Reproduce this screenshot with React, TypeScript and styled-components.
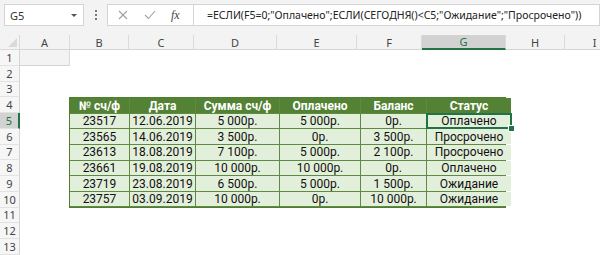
import * as React from 'react';
import styled, { createGlobalStyle, css } from 'styled-components';

const GlobalStyle = createGlobalStyle`
  html, body {
    margin: 0;
    padding: 0;
    background: #ffffff;
    overflow: hidden;
  }
`;

const COLUMNS = ['A', 'B', 'C', 'D', 'E', 'F', 'G', 'H', 'I'];
const COL_WIDTHS = [20, 50, 59, 65, 83, 80, 65, 84, 59, 60];
const ROW_H = 15.75;
const ROW_COUNT = 13;

const HEADERS = ['№ сч/ф', 'Дата', 'Сумма сч/ф', 'Оплачено', 'Баланс', 'Статус'];

const ROWS = [
  ['23517', '12.06.2019', '5 000р.', '5 000р.', '0р.', 'Оплачено'],
  ['23565', '14.06.2019', '3 500р.', '0р.', '3 500р.', 'Просрочено'],
  ['23613', '18.08.2019', '7 100р.', '5 000р.', '2 100р.', 'Просрочено'],
  ['23661', '19.08.2019', '10 000р.', '10 000р.', '0р.', 'Оплачено'],
  ['23719', '23.08.2019', '6 500р.', '5 000р.', '1 500р.', 'Ожидание'],
  ['23757', '03.09.2019', '10 000р.', '0р.', '10 000р.', 'Ожидание'],
];

// <editor-fold desc="Styled Component">
const Page = styled.div`
  width: 600px;
  height: 255px;
  display: flex;
  flex-direction: column;
  background: #ffffff;
  font-family: 'Noto Sans', 'Open Sans', sans-serif;
  overflow: hidden;
`;

const Toolbar = styled.div`
  height: 35px;
  flex: none;
  display: flex;
  align-items: flex-start;
  padding: 4px 0 0 4px;
  box-sizing: border-box;
  background: #f3f3f3;
`;

const Box = styled.div`
  height: 22px;
  box-sizing: border-box;
  background: #ffffff;
  border: 1px solid #d4d4d4;
  display: flex;
  align-items: center;
`;

const NameBox = styled(Box)`
  width: 80px;
  padding: 0 6px 0 5px;
  justify-content: space-between;
  font-size: 11px;
  color: #333333;
`;

const Caret = styled.span`
  width: 0;
  height: 0;
  border-left: 3px solid transparent;
  border-right: 3px solid transparent;
  border-top: 3px solid #555555;
`;

const Grip = styled.div`
  width: 23px;
  height: 22px;
  display: flex;
  flex-direction: column;
  align-items: center;
  justify-content: center;
  gap: 2px;
  & > span {
    width: 2px;
    height: 2px;
    background: #777777;
  }
`;

const ActionBox = styled(Box)`
  width: 86px;
  padding: 0 0 0 10px;
  gap: 16px;
  border-right: none;
`;

const FormulaBox = styled(Box)`
  flex: 1;
  padding-left: 13px;
  font-size: 10.5px;
  color: #222222;
  white-space: nowrap;
  overflow: hidden;
`;

const Fx = styled.span`
  font-family: 'Liberation Serif', serif;
  font-style: italic;
  font-size: 12px;
  color: #444444;
  margin-left: -1px;
`;

const Sheet = styled.div`
  display: grid;
  grid-template-columns: ${COL_WIDTHS.map((w) => `${w}px`).join(' ')};
  grid-template-rows: 15px repeat(${ROW_COUNT}, ${ROW_H}px);
`;

const Corner = styled.div`
  background: #f3f3f3;
  border-right: 1px solid #d9d9d9;
  border-bottom: 1px solid #d9d9d9;
  box-sizing: border-box;
  position: relative;
  &::after {
    content: '';
    position: absolute;
    right: 2px;
    bottom: 2px;
    width: 0;
    height: 0;
    border-left: 9px solid transparent;
    border-bottom: 9px solid #dadada;
  }
`;

const ColHead = styled.div<{ $active?: boolean }>`
  box-sizing: border-box;
  display: flex;
  align-items: center;
  justify-content: center;
  font-size: 11px;
  color: #444444;
  background: #f3f3f3;
  border-right: 1px solid #dadada;
  border-bottom: 1px solid #d4d4d4;
  ${(p) =>
    p.$active &&
    css`
      background: #d2d2d2;
      color: #217346;
      border-bottom: 2px solid #217346;
    `}
`;

const RowHead = styled.div<{ $active?: boolean }>`
  box-sizing: border-box;
  display: flex;
  align-items: center;
  justify-content: center;
  font-size: 11px;
  color: #444444;
  background: #f6f6f6;
  border-right: 1px solid #d4d4d4;
  border-bottom: 1px solid #e2e2e2;
  ${(p) =>
    p.$active &&
    css`
      background: #d2d2d2;
      color: #217346;
      border-right: 2px solid #217346;
    `}
`;

const Table = styled.div`
  grid-column: 3 / 9;
  grid-row: 5 / 12;
  margin-left: -1px;
  display: grid;
  grid-template-columns: ${COL_WIDTHS.slice(2, 8).map((w) => `${w}px`).join(' ')};
  grid-template-rows: repeat(7, 1fr);
  border: 1px solid #4f7d32;
  background: #5f8a41;
  gap: 1px;
  z-index: 1;
`;

const Cell = styled.div<{ $head?: boolean; $selected?: boolean }>`
  display: flex;
  align-items: center;
  justify-content: center;
  position: relative;
  font-family: Roboto, 'Noto Sans', sans-serif;
  font-size: 12px;
  white-space: nowrap;
  overflow: visible;
  background: #e2efda;
  color: #111111;
  ${(p) =>
    p.$head &&
    css`
      background: #548235;
      color: #ffffff;
      font-weight: 700;
    `}
  ${(p) =>
    p.$selected &&
    css`
      &::after {
        content: '';
        position: absolute;
        inset: -1px;
        border: 2px solid #217346;
      }
      &::before {
        content: '';
        position: absolute;
        right: -4px;
        bottom: -4px;
        width: 5px;
        height: 5px;
        background: #217346;
        border: 1px solid #ffffff;
        z-index: 2;
      }
    `}
`;
// </editor-fold>

const CrossIcon = () => (
  <svg width="10" height="10" viewBox="0 0 10 10">
    <path d="M1 1 L9 9 M9 1 L1 9" stroke="#a0a0a0" strokeWidth="1.1" fill="none" />
  </svg>
);

const CheckIcon = () => (
  <svg width="12" height="10" viewBox="0 0 12 10">
    <path d="M1 5 L4.5 8.5 L11 1" stroke="#a0a0a0" strokeWidth="1.1" fill="none" />
  </svg>
);

export default function App() {
  const sheetCells: React.ReactNode[] = [];

  sheetCells.push(<Corner key="corner" />);
  COLUMNS.forEach((c) => {
    sheetCells.push(
      <ColHead key={`c-${c}`} $active={c === 'G'}>
        {c}
      </ColHead>
    );
  });
  sheetCells.push(<ColHead key="c-rest" />);

  for (let r = 1; r <= ROW_COUNT; r++) {
    sheetCells.push(
      <RowHead key={`r-${r}`} style={{ gridColumn: 1, gridRow: r + 1 }} $active={r === 5}>
        {r}
      </RowHead>
    );
  }

  return (
    <Page>
      <GlobalStyle />
      <Toolbar>
        <NameBox>
          <span>G5</span>
          <Caret />
        </NameBox>
        <Grip>
          <span />
          <span />
          <span />
        </Grip>
        <ActionBox>
          <CrossIcon />
          <CheckIcon />
          <Fx>fx</Fx>
        </ActionBox>
        <FormulaBox>=ЕСЛИ(F5=0;"Оплачено";ЕСЛИ(СЕГОДНЯ()&lt;C5;"Ожидание";"Просрочено"))</FormulaBox>
      </Toolbar>
      <Sheet>
        {sheetCells}
        <Table>
          {HEADERS.map((h) => (
            <Cell key={h} $head>
              {h}
            </Cell>
          ))}
          {ROWS.map((row, ri) =>
            row.map((v, ci) => (
              <Cell key={`${ri}-${ci}`} $selected={ri === 0 && ci === 5}>
                {v}
              </Cell>
            ))
          )}
        </Table>
      </Sheet>
    </Page>
  );
}
